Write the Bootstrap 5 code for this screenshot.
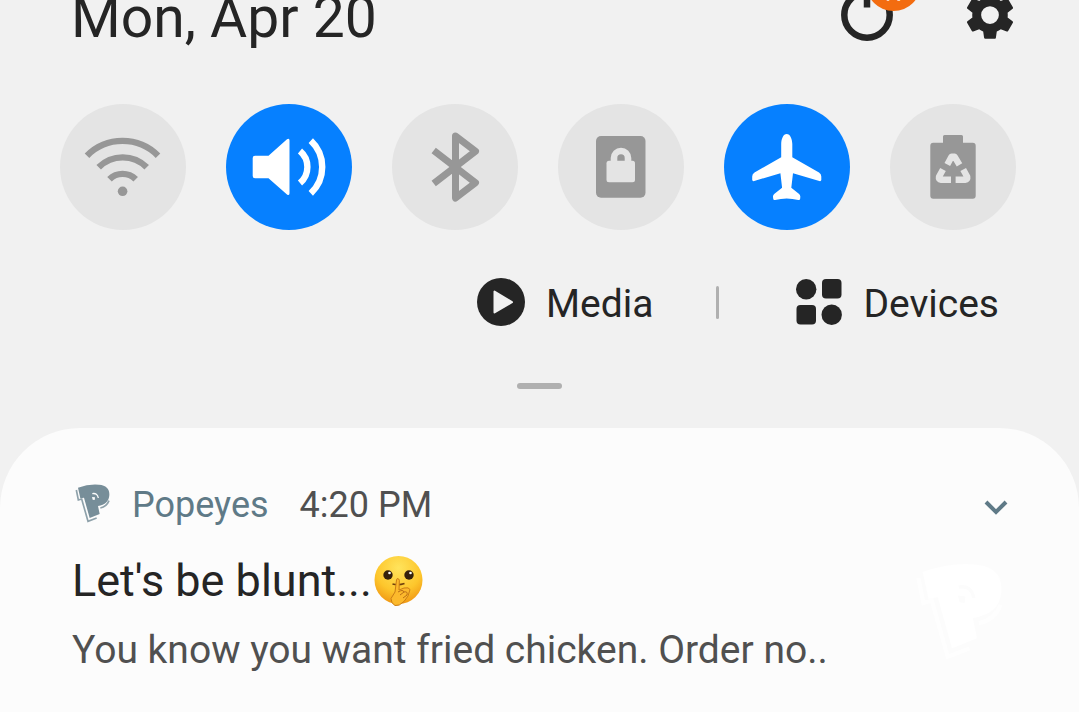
<!DOCTYPE html>
<html lang="en">
<head>
<meta charset="utf-8">
<meta name="viewport" content="width=device-width, initial-scale=1">
<title>Quick settings</title>
<link href="https://cdn.jsdelivr.net/npm/bootstrap@5.3.0/dist/css/bootstrap.min.css" rel="stylesheet">
<style>
  body { background: #f1f1f1; color: #252525; font-family: Roboto, sans-serif; }
  svg { display: block; flex: none; }
  .shade-head { height: 48px; padding-left: 71px; padding-right: 60px; }
  .shade-date { font-size: 57px; line-height: 60px; }
  .head-btns { gap: 65px; }
  .head-btn { width: 58px; height: 66px; }
  .update-dot { top: -26px; left: 28px; width: 55px; height: 55px; background: #f36c10; color: #ffd9bd; font-size: 24px; line-height: 74px; }
  .toggles { padding: 56px 63px 0 60px; }
  .toggle { width: 126px; height: 126px; background: #e4e4e4; color: #979797; }
  .toggle[aria-pressed="true"] { background: #0680ff; color: #fff; }
  .panel-links { padding: 48px 80px 0 0; font-size: 39px; line-height: 48px; }
  .panel-links .btn { font-size: inherit; line-height: inherit; color: inherit; gap: 21px; }
  .panel-links span { padding-top: 4px; line-height: 44px; }
  .split { width: 3px; height: 33px; background: #b0b0b0; margin: 0 77px 0 63px; }
  .handle { width: 45px; height: 6px; background: #b0b0b0; margin-top: 57px; margin-bottom: 39px; }
  .notice { background: #fcfcfc; border-radius: 80px 80px 0 0; padding: 53px 71px 28px 72px; }
  .source { font-size: 36px; line-height: 48px; }
  .app-name { color: #5f7a87; margin-left: 20px; }
  .stamp { color: #505050; margin-left: 31px; }
  .accent { color: #5f7a87; }
  .headline { font-size: 45px; line-height: 56px; gap: 2px; }
  .message { font-size: 39px; line-height: 50px; color: #505050; }
</style>
</head>
<body>
<div class="min-vh-100 d-flex flex-column overflow-hidden">
  <header class="shade-head d-flex align-items-end justify-content-between overflow-hidden">
    <div class="shade-date text-nowrap">Mon, Apr 20</div>
    <div class="head-btns d-flex align-items-end">
      <button type="button" class="head-btn btn p-0 border-0 position-relative" aria-label="Power">
        <svg width="58" height="66" viewBox="0 0 58 66" fill="none" stroke="#252525" stroke-width="6.500"><circle cx="29" cy="33" r="22.700"/><path d="M29 8v17.500"/></svg>
        <span class="update-dot position-absolute rounded-circle text-center">N</span>
      </button>
      <button type="button" class="head-btn btn p-0 border-0" aria-label="Settings">
        <svg width="58" height="66" viewBox="0.250 -1.400 23.500 26.750" fill="#252525"><path d="M19.14 12.94c.04-.3.06-.61.06-.94 0-.32-.02-.64-.07-.94l2.03-1.58c.18-.14.23-.41.12-.61l-1.92-3.32c-.12-.22-.37-.29-.59-.22l-2.39.96c-.5-.38-1.03-.7-1.62-.94L14.4 2.81c-.04-.24-.24-.41-.48-.41h-3.84c-.24 0-.43.17-.47.41L9.25 5.35C8.66 5.59 8.12 5.92 7.63 6.29L5.24 5.33c-.22-.08-.47 0-.59.22L2.74 8.87c-.12.21-.08.47.12.61l2.03 1.58c-.05.3-.09.63-.09.94s.02.64.07.94l-2.03 1.58c-.18.14-.23.41-.12.61l1.92 3.32c.12.22.37.29.59.22l2.39-.96c.5.38 1.03.7 1.62.94l.36 2.54c.05.24.24.41.48.41h3.84c.24 0 .44-.17.47-.41l.36-2.54c.59-.24 1.13-.56 1.62-.94l2.39.96c.22.08.47 0 .59-.22l1.92-3.32c.12-.22.07-.47-.12-.61ZM12 15.6a3.6 3.6 0 1 1 0-7.2 3.6 3.6 0 0 1 0 7.2Z"/></svg>
      </button>
    </div>
  </header>

  <main class="flex-grow-1 d-flex flex-column">
    <div class="toggles d-flex justify-content-between">
      <button type="button" class="toggle btn rounded-circle p-0 border-0" aria-pressed="false" aria-label="Wi-Fi">
        <svg width="126" height="126" viewBox="0 0 126 126" fill="none" stroke="currentColor" stroke-width="6.400"><path d="M27 51.700a50 50 0 0 1 71 0M38.700 63.300a34 34 0 0 1 48 0M49.500 75.300a18.500 18.500 0 0 1 26.200 0"/><circle cx="62.600" cy="87.300" r="4.800" fill="currentColor" stroke="none"/></svg>
      </button>
      <button type="button" class="toggle btn rounded-circle p-0 border-0" aria-pressed="true" aria-label="Sound">
        <svg width="126" height="126" viewBox="0 0 126 126" fill="none" stroke="currentColor" stroke-width="6.400"><path d="M29 51.700h13.500L61 35.300q2.500-1.500 2.500 1.200v52.800q0 2.700-2.500 1.200L42.500 74.300H29q-2.300 0-2.300-2.300V54q0-2.300 2.300-2.300Z" fill="currentColor" stroke="none"/><path d="M74 47a21 21 0 0 1 0 32M84.800 36.700a36 36 0 0 1 0 52.600"/></svg>
      </button>
      <button type="button" class="toggle btn rounded-circle p-0 border-0" aria-pressed="false" aria-label="Bluetooth">
        <svg width="126" height="126" viewBox="0 0 126 126" fill="none" stroke="currentColor" stroke-width="7" stroke-linejoin="round"><path d="M41.700 46.500 83.500 78.700 63.500 94V32l20 15.300L41.700 79.500"/></svg>
      </button>
      <button type="button" class="toggle btn rounded-circle p-0 border-0" aria-pressed="false" aria-label="Rotation lock">
        <svg width="126" height="126" viewBox="0 0 126 126"><rect x="38" y="32" width="49.500" height="61.700" rx="5" fill="currentColor"/><rect x="48.500" y="56.700" width="28.500" height="21.600" rx="2.500" fill="#e4e4e4"/><path d="M56 58v-4a7 7 0 0 1 14 0v4" fill="none" stroke="#e4e4e4" stroke-width="6.600"/></svg>
      </button>
      <button type="button" class="toggle btn rounded-circle p-0 border-0" aria-pressed="true" aria-label="Airplane mode">
        <svg width="126" height="126" viewBox="0 0 126 126" fill="currentColor"><path d="M62.700 30c3.500 0 5.500 5 5.600 10v13.300L95 68.500q2.300 1.500 2.300 4V76q-.3 1.500-2 1L69 69.300 67.300 83.700l7.500 6q1.700 1.300 1.500 3.300l-.2 2.300q-.3 1-1.800.7-11.600-3-23.200 0-1.500.3-1.800-.7L49 93q-.2-2 1.500-3.300l7.600-6L56.400 69.300 30.200 77q-1.700.5-2-1v-3.500q0-2.500 2.300-4l26.700-15.200V40c.1-5 2-10 5.500-10Z"/></svg>
      </button>
      <button type="button" class="toggle btn rounded-circle p-0 border-0" aria-pressed="false" aria-label="Power saving">
        <svg width="126" height="126" viewBox="0 0 126 126"><path d="M54.500 31h17q1.500 0 1.500 1.500v6.200h9.700q3 0 3 3v50q0 3-3 3H43.300q-3 0-3-3v-50q0-3 3-3H53v-6.200q0-1.500 1.500-1.500Z" fill="currentColor"/><g fill="none" stroke="#e4e4e4" stroke-width="6.400" stroke-linejoin="round"><path d="m57.300 60.500 4.200-7.700h3.200l4.800 8M53 65.500l-4 7.300q-.5 2.700 2 2.900h10M73.200 65.500l4 7.300q.5 2.700-2 2.900H65.600"/></g><path d="m63.200 58 4.500 8h-3v8h-3.200v-8h-3Z" fill="currentColor"/></svg>
      </button>
    </div>

    <div class="panel-links d-flex justify-content-end align-items-center">
      <button type="button" class="btn p-0 border-0 d-flex align-items-center">
        <svg width="48" height="48" viewBox="0 0 48 48"><circle cx="24" cy="24" r="24" fill="#252525"/><path d="M17.500 13.500v21L35 24.200Z" fill="#f1f1f1" stroke="#f1f1f1" stroke-width="2" stroke-linejoin="round"/></svg>
        <span>Media</span>
      </button>
      <div class="split rounded-pill"></div>
      <button type="button" class="btn p-0 border-0 d-flex align-items-center">
        <svg width="46" height="46" viewBox="0 0 46 46" fill="#252525"><circle cx="10.200" cy="10.200" r="10.200"/><rect x="26" y="0" width="19.500" height="19.500" rx="4"/><rect x="0.500" y="26" width="19.500" height="19.500" rx="4"/><circle cx="35.700" cy="35.700" r="10.200"/></svg>
        <span>Devices</span>
      </button>
    </div>

    <div class="handle rounded-pill mx-auto"></div>

    <article class="notice flex-grow-1">
      <div class="source d-flex align-items-center">
        <svg class="accent" width="40" height="42" viewBox="37 39 120 126"><g id="crest-shape"><path d="M55 50Q88 38 118 41C140 43 150 54 149 72C148 92 136 101 115 105L120 129L90 141L73 80L62 82Z" fill="currentColor" opacity=".85"/><path d="M50 57l6 30 10-3 19 67 26-10M122 111q19-4 26-22" fill="none" stroke="currentColor" stroke-width="5" opacity=".7"/><path d="M98 68q15-3 18 13" fill="none" stroke="#fcfcfc" stroke-width="4"/><path d="m97 78 9 1-1 8-6-1Z" fill="#fcfcfc"/></g></svg>
        <span class="app-name">Popeyes</span>
        <time class="stamp">4:20 PM</time>
        <button type="button" class="btn p-0 border-0 ms-auto accent" aria-label="Expand">
          <svg width="24" height="24" viewBox="0 0 24 24" fill="none" stroke="currentColor" stroke-width="4"><path d="m2 9 10 10L22 9"/></svg>
        </button>
      </div>
      <div class="d-flex justify-content-between align-items-center mt-4">
        <div>
          <div class="headline d-flex align-items-center">
            <span>Let's be blunt...</span>
            <svg width="50" height="52" viewBox="0 0 50 52" role="img" aria-label="Shushing face">
              <defs><radialGradient id="skin" cx=".5" cy=".25" r=".8"><stop offset="0" stop-color="#ffe45c"/><stop offset=".6" stop-color="#fdc62c"/><stop offset="1" stop-color="#ee9010"/></radialGradient></defs>
              <circle cx="24.500" cy="25" r="24" fill="url(#skin)"/>
              <circle cx="14" cy="20" r="4.700" fill="#35200c"/><circle cx="35" cy="20" r="4.700" fill="#35200c"/><circle cx="15.500" cy="18" r="1.300" fill="#fff"/><circle cx="36.500" cy="18" r="1.300" fill="#fff"/>
              <path d="M18.500 29q6 1.500 12-.5" fill="none" stroke="#70410e" stroke-width="1.500"/>
              <path d="M21 37l1.500-12q.5-2.500 2.200-1 1 1 .6 3L25 35l5-2q5-1 6 1.500-1 7-6 12-5 5-9 4-4-2-4-7Z" fill="#fcb92c" stroke="#ca7d16" stroke-width="1"/>
              <path d="M24 37q5-3 6 0l-4 3M30 37q4-1 3 3l-4 3" fill="none" stroke="#ba6e15" stroke-width="1"/>
            </svg>
          </div>
          <div class="message mt-3">You know you want fried chicken. Order no..</div>
        </div>
        <svg class="me-1" width="94" height="102" viewBox="40 40 112 120" color="#fff" aria-hidden="true"><use href="#crest-shape"/></svg>
      </div>
    </article>
  </main>
</div>
<script src="https://cdn.jsdelivr.net/npm/bootstrap@5.3.0/dist/js/bootstrap.bundle.min.js"></script>
</body>
</html>
